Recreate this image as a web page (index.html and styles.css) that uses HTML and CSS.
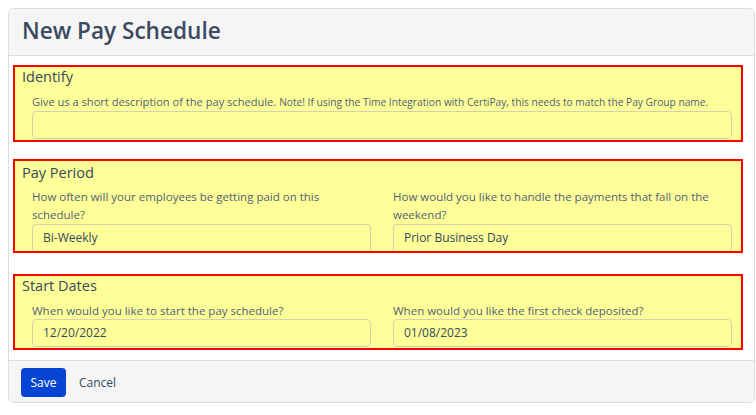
FILE: index.html
```html
<!DOCTYPE html>
<html>
<head>
<meta charset="utf-8">
<link rel="stylesheet" href="styles.css">
</head>
<body>
<div class="card">
  <div class="card-header"><h1 class="title">New Pay Schedule</h1></div>
  <div class="card-body">
    <section class="box box-identify">
      <h2 class="box-title">Identify</h2>
      <div class="group">
        <label class="label label-main">Give us a short description of the pay schedule. <small class="note">Note! If using the Time Integration with CertiPay, this needs to match the Pay Group name.</small></label>
        <div class="input"></div>
      </div>
    </section>
    <section class="box box-period">
      <h2 class="box-title">Pay Period</h2>
      <div class="row">
        <div class="group">
          <label class="label label-2">How often will your employees be getting paid on this schedule?</label>
          <div class="input input-cut">Bi-Weekly</div>
        </div>
        <div class="group">
          <label class="label label-2">How would you like to handle the payments that fall on the weekend?</label>
          <div class="input input-cut">Prior Business Day</div>
        </div>
      </div>
    </section>
    <section class="box box-dates">
      <h2 class="box-title">Start Dates</h2>
      <div class="row">
        <div class="group">
          <label class="label label-s">When would you like to start the pay schedule?</label>
          <div class="input">12/20/2022</div>
        </div>
        <div class="group">
          <label class="label label-s">When would you like the first check deposited?</label>
          <div class="input">01/08/2023</div>
        </div>
      </div>
    </section>
  </div>
  <div class="card-footer">
    <button class="btn-save">Save</button>
    <a class="btn-cancel">Cancel</a>
  </div>
</div>
</body>
</html>
```

FILE: styles.css
```css
* { box-sizing: border-box; }
body {
  margin: 0;
  padding: 8px 0 0 8px;
  font-family: "Open Sans", "Noto Sans", sans-serif;
  color: #34495e;
  background: #fff;
}
.card {
  width: 747px;
  border: 1px solid #dcdcdc;
  border-radius: 6px;
  overflow: hidden;
  background: #fff;
}
.card-header {
  background: #f5f5f5;
  height: 47px;
  border-bottom: 1px solid #dcdcdc;
  padding: 7px 0 0 13px;
}
.title {
  margin: 0;
  font-size: 22.6px;
  font-weight: 600;
  line-height: 30px;
  color: #3b4a60;
}
.card-body {
  padding: 9px 11px 10px 4px;
  display: flex;
  flex-direction: column;
}
.box {
  border: 2px solid #ff0000;
  background: #ffff99;
  padding: 0 9px 0 7px;
}
.box-identify { height: 77px; }
.box-period { margin-top: 17px; height: 94px; }
.box-dates { margin-top: 21px; height: 76px; }
.box-title {
  margin: 0;
  font-size: 14.5px;
  font-weight: 500;
  line-height: 20px;
  color: #34495e;
}
.box-period .box-title { padding-top: 2px; }
.group {
  padding-left: 10px;
  display: flex;
  flex-direction: column;
}
.row {
  display: grid;
  grid-template-columns: 1fr 1fr;
  column-gap: 12px;
}
.label {
  display: block;
  margin-top: 6px;
  font-size: 11.5px;
  line-height: 18px;
  color: #4f5f75;
}
.label-main { font-size: 11.1px; white-space: nowrap; }
.label-2 { margin-top: 5px; height: 36px; }
.label-s { line-height: 17px; }
.note { font-size: 10.2px; }
.input {
  height: 28px;
  border: 1px solid #d2d2b0;
  border-radius: 4px;
  padding: 0 10px;
  font-size: 12px;
  line-height: 26px;
  color: #34495e;
}
.input-cut { height: 27px; border-bottom: none; border-bottom-left-radius: 0; border-bottom-right-radius: 0; }
.card-footer {
  border-top: 1px solid #dcdcdc;
  background: #f5f5f5;
  padding: 6px 0 5px 12px;
  display: flex;
  align-items: center;
  height: 42px;
}
.btn-save {
  width: 45px;
  height: 29px;
  border: none;
  border-radius: 4px;
  background: #0645d3;
  color: #fff;
  font-family: "Open Sans", sans-serif;
  font-size: 12px;
  padding: 0;
}
.btn-cancel {
  margin-left: 13px;
  font-size: 12px;
  color: #34495e;
}
```
